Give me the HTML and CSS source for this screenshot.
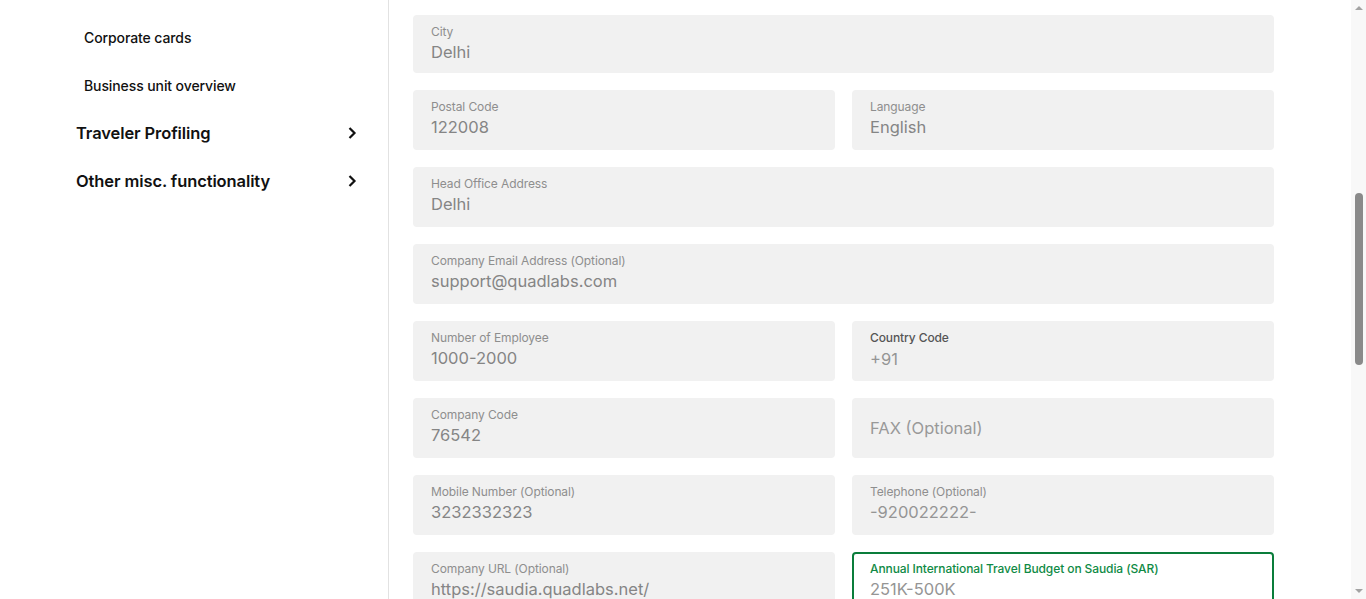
FILE: index.html
```html
<!DOCTYPE html>
<html>
<head>
<meta charset="utf-8">
<link rel="stylesheet" href="styles.css">
</head>
<body>
<div class="app">
  <aside class="sidebar">
    <div class="nav-item sub">Corporate cards</div>
    <div class="nav-item sub">Business unit overview</div>
    <div class="nav-item main">Traveler Profiling
      <svg class="chev" width="10" height="14" viewBox="0 0 10 14"><path d="M2.5 2 L7.5 7 L2.5 12" fill="none" stroke="#111" stroke-width="2.2"/></svg>
    </div>
    <div class="nav-item main">Other misc. functionality
      <svg class="chev" width="10" height="14" viewBox="0 0 10 14"><path d="M2.5 2 L7.5 7 L2.5 12" fill="none" stroke="#111" stroke-width="2.2"/></svg>
    </div>
  </aside>
  <main class="content">
    <div class="form">
      <div class="field full first"><div class="label">City</div><div class="value">Delhi</div></div>
      <div class="field"><div class="label">Postal Code</div><div class="value">122008</div></div>
      <div class="field"><div class="label">Language</div><div class="value">English</div></div>
      <div class="field full"><div class="label">Head Office Address</div><div class="value">Delhi</div></div>
      <div class="field full"><div class="label">Company Email Address (Optional)</div><div class="value">support@quadlabs.com</div></div>
      <div class="field"><div class="label">Number of Employee</div><div class="value">1000-2000</div></div>
      <div class="field"><div class="label dark">Country Code</div><div class="value small-top light">+91</div></div>
      <div class="field"><div class="label">Company Code</div><div class="value">76542</div></div>
      <div class="field placeholder"><div class="ph">FAX (Optional)</div></div>
      <div class="field"><div class="label">Mobile Number (Optional)</div><div class="value">3232332323</div></div>
      <div class="field"><div class="label">Telephone (Optional)</div><div class="value light">-920022222-</div></div>
      <div class="field"><div class="label">Company URL (Optional)</div><div class="value">https://saudia.quadlabs.net/</div></div>
      <div class="field active"><div class="label green">Annual International Travel Budget on Saudia (SAR)</div><div class="value light">251K-500K</div></div>
    </div>
  </main>
  <div class="scrollbar">
    <div class="arrow up"></div>
    <div class="track"><div class="thumb"></div></div>
    <div class="arrow down"></div>
  </div>
</div>
</body>
</html>
```

FILE: styles.css
```css
* { box-sizing: border-box; }
html, body { margin: 0; padding: 0; height: 100%; overflow: hidden; background: #fff; }
body { font-family: Inter, "Noto Sans", "Liberation Sans", sans-serif; color: #111; }

.app { display: flex; height: 599px; }

.sidebar {
  width: 389px;
  flex: none;
  border-right: 1px solid #e2e2e2;
  padding: 13px 31px 0 76px;
  display: flex;
  flex-direction: column;
}
.nav-item {
  height: 48px;
  display: flex;
  align-items: center;
  justify-content: space-between;
}
.nav-item.sub { padding-left: 8px; font-size: 14px; font-weight: 500; letter-spacing: -0.1px; }
.nav-item.main { font-size: 16.5px; font-weight: 600; letter-spacing: -0.1px; }
.chev { display: block; }

.content { flex: 1; padding: 15px 0 0 24px; overflow: hidden; }
.form {
  width: 863px;
  display: grid;
  grid-template-columns: 422px 422px;
  column-gap: 17px;
  row-gap: 17px;
}
.field {
  height: 60px;
  background: #f1f1f1;
  border-radius: 4px;
  padding: 9px 18px 0 18px;
}
.field.first { height: 58px; }
.field.full { grid-column: 1 / 3; }
.label { font-size: 12px; line-height: 16px; color: #8e8e8e; letter-spacing: -0.1px; }
.label.dark { color: #555; font-weight: 500; }
.label.green { color: #0f8a45; font-weight: 500; }
.value { margin-top: 1px; font-size: 16.5px; line-height: 22px; color: #858585; }
.value.small-top { margin-top: 2px; }
.value.light { color: #959595; }
.field.placeholder { display: flex; align-items: center; padding-top: 0; }
.ph { font-size: 16.5px; color: #999; }
.field.active { background: #fff; border: 2px solid #0a7d3b; padding: 7px 16px 0 16px; }

.scrollbar {
  width: 15px;
  flex: none;
  background: #f8f8f8;
  display: flex;
  flex-direction: column;
  align-items: center;
}
.arrow { width: 0; height: 0; border-left: 4px solid transparent; border-right: 4px solid transparent; }
.arrow.up { margin-top: 6px; border-bottom: 4px solid #a3a3a3; }
.arrow.down { margin-bottom: 6px; border-top: 4px solid #a3a3a3; }
.track { flex: 1; width: 100%; display: flex; justify-content: center; padding-top: 183px; }
.thumb { width: 8px; height: 172px; background: #8a8a8a; border-radius: 4px; }
```
